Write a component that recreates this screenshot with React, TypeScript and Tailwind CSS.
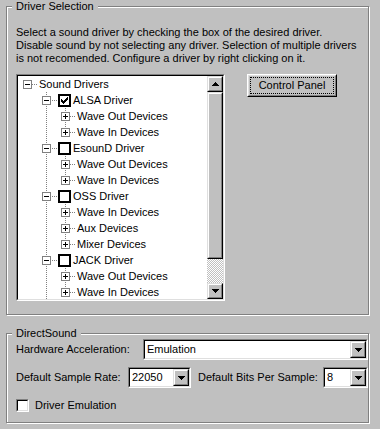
import React from 'react';

type Row = { label: string; level: number; check?: boolean; last?: boolean };

const rows: Row[] = [
  { label: 'Sound Drivers', level: 0 },
  { label: 'ALSA Driver', level: 1, check: true },
  { label: 'Wave Out Devices', level: 2 },
  { label: 'Wave In Devices', level: 2, last: true },
  { label: 'EsounD Driver', level: 1, check: false },
  { label: 'Wave Out Devices', level: 2 },
  { label: 'Wave In Devices', level: 2, last: true },
  { label: 'OSS Driver', level: 1, check: false },
  { label: 'Wave In Devices', level: 2 },
  { label: 'Aux Devices', level: 2 },
  { label: 'Mixer Devices', level: 2, last: true },
  { label: 'JACK Driver', level: 1, check: false },
  { label: 'Wave Out Devices', level: 2 },
  { label: 'Wave In Devices', level: 2, last: true },
];

const CHECK = ['......#', '.....##', '#...###', '##.###.', '#####..', '.###...', '..#....'];

function Sunken({ className = '', children }: { className?: string; children?: React.ReactNode }) {
  return (
    <div className={`border border-t-[#808080] border-l-[#808080] border-b-white border-r-white ${className}`}>
      <div className="h-full w-full border border-t-black border-l-black border-b-[#dfdfdf] border-r-[#dfdfdf]">
        {children}
      </div>
    </div>
  );
}

function Raised({ className = '', push, children }: { className?: string; push?: boolean; children?: React.ReactNode }) {
  const outer = push ? 'border-t-white border-l-white' : 'border-t-[#dfdfdf] border-l-[#dfdfdf]';
  const inner = push ? 'border-t-[#dfdfdf] border-l-[#dfdfdf]' : 'border-t-white border-l-white';
  return (
    <div className={`border ${outer} border-b-black border-r-black bg-[#c0c0c0] ${className}`}>
      <div className={`flex h-full w-full items-center justify-center border ${inner} border-b-[#808080] border-r-[#808080]`}>
        {children}
      </div>
    </div>
  );
}

function Arrow({ up }: { up?: boolean }) {
  return (
    <svg width="7" height="4" shapeRendering="crispEdges">
      {[1, 3, 5, 7].map((w, i) => (
        <rect key={i} x={(7 - w) / 2} y={up ? i : 3 - i} width={w} height={1} fill="#000" />
      ))}
    </svg>
  );
}

function Combo({ value, className = '' }: { value: string; className?: string }) {
  return (
    <Sunken className={`h-[21px] ${className}`}>
      <div className="flex h-full bg-white">
        <span className="flex-1 pl-[2px] leading-[17px]">{value}</span>
        <Raised className="h-full w-[16px]">
          <Arrow />
        </Raised>
      </div>
    </Sunken>
  );
}

function Gutter({ row }: { row: Row }) {
  const w = 21 + 19 * row.level;
  const cx = 9 + 19 * row.level;
  const dots: React.ReactNode[] = [];
  const vline = (x: number, y0: number, y1: number) => {
    for (let y = y0; y < y1; y++) if (y % 2 === 0) dots.push(<rect key={`v${x}-${y}`} x={x} y={y} width={1} height={1} />);
  };
  if (row.level >= 1) vline(28, 0, 16);
  if (row.level === 2) vline(47, 0, row.last ? 9 : 16);
  for (let x = cx; x < cx + 11; x++) if (x % 2 === 0) dots.push(<rect key={`h${x}`} x={x} y={8} width={1} height={1} />);
  const expanded = row.level < 2;
  return (
    <svg width={w} height="16" shapeRendering="crispEdges" className="shrink-0">
      <g fill="#808080">{dots}</g>
      <rect x={cx - 4 + 0.5} y={4.5} width={8} height={8} fill="#fff" stroke="#808080" />
      <rect x={cx - 2} y={8} width={5} height={1} fill="#000" />
      {!expanded && <rect x={cx} y={6} width={1} height={5} fill="#000" />}
    </svg>
  );
}

function TreeCheck({ on }: { on: boolean }) {
  return (
    <svg width="13" height="13" shapeRendering="crispEdges" className="mr-[2px] shrink-0">
      <rect x={1} y={1} width={11} height={11} fill="#fff" stroke="#000" strokeWidth={2} />
      {on &&
        CHECK.flatMap((line, y) =>
          line.split('').map((c, x) => (c === '#' ? <rect key={`${x}-${y}`} x={3 + x} y={3 + y} width={1} height={1} fill="#000" /> : null))
        )}
    </svg>
  );
}

function Tree() {
  return (
    <Sunken className="h-[227px] w-[209px]">
      <div className="flex h-full">
        <div className="flex-1 overflow-hidden bg-white">
          {rows.map((row, i) => (
            <div key={i} className="flex h-[16px] items-center whitespace-nowrap leading-[16px]">
              <Gutter row={row} />
              {row.check !== undefined && <TreeCheck on={row.check} />}
              <span>{row.label}</span>
            </div>
          ))}
        </div>
        <div className="flex w-[16px] flex-col">
          <Raised className="h-[16px]">
            <Arrow up />
          </Raised>
          <Raised className="h-[167px]" />
          <div className="flex-1 bg-[image:repeating-conic-gradient(#c0c0c0_0%_25%,#ffffff_0%_50%)] bg-[length:2px_2px]" />
          <Raised className="h-[16px]">
            <Arrow />
          </Raised>
        </div>
      </div>
    </Sunken>
  );
}

function Group({ title, className = '', children }: { title: string; className?: string; children: React.ReactNode }) {
  return (
    <fieldset
      className={`ml-[6px] w-[363px] border border-[#808080] shadow-[inset_1px_1px_0_#fff,1px_1px_0_#fff] ${className}`}
    >
      <legend className="ml-[5px] bg-[#c0c0c0] px-[4px] leading-[13px]">{title}</legend>
      {children}
    </fieldset>
  );
}

export default function App() {
  return (
    <div className="h-[429px] w-[380px] overflow-hidden bg-[#c0c0c0] font-['Liberation_Sans',Arial,sans-serif] text-[11px] text-black">
      <Group title="Driver Selection" className="h-[315px]">
        <div className="pl-[9px] pt-[13px]">
          <p className="whitespace-nowrap leading-[13px]">
            Select a sound driver by checking the box of the desired driver.
            <br />
            Disable sound by not selecting any driver. Selection of multiple drivers
            <br />
            is not recomended. Configure a driver by right clicking on it.
          </p>
          <div className="mt-[9px] flex items-start">
            <Tree />
            <Raised push className="ml-[22px] h-[23px] w-[90px]">
              <div className="m-[1px] flex h-[calc(100%-2px)] w-[calc(100%-2px)] items-center justify-center border border-dotted border-black">
                Control Panel
              </div>
            </Raised>
          </div>
        </div>
      </Group>

      <Group title="DirectSound" className="mt-[12px] h-[96px]">
        <div className="-mt-[1px] pl-[9px]">
          <div className="flex h-[21px] items-center">
            <span className="w-[127px]">Hardware Acceleration:</span>
            <Combo className="w-[225px]" value="Emulation" />
          </div>
          <div className="mt-[7px] flex h-[21px] items-center">
            <span className="w-[112px]">Default Sample Rate:</span>
            <Combo className="w-[63px]" value="22050" />
            <span className="ml-[7px] flex-1">Default Bits Per Sample:</span>
            <Combo className="w-[45px]" value="8" />
          </div>
          <div className="mt-[11px] flex items-center">
            <Sunken className="h-[13px] w-[13px]">
              <div className="h-full bg-white" />
            </Sunken>
            <span className="ml-[6px] leading-[13px]">Driver Emulation</span>
          </div>
        </div>
      </Group>
    </div>
  );
}
